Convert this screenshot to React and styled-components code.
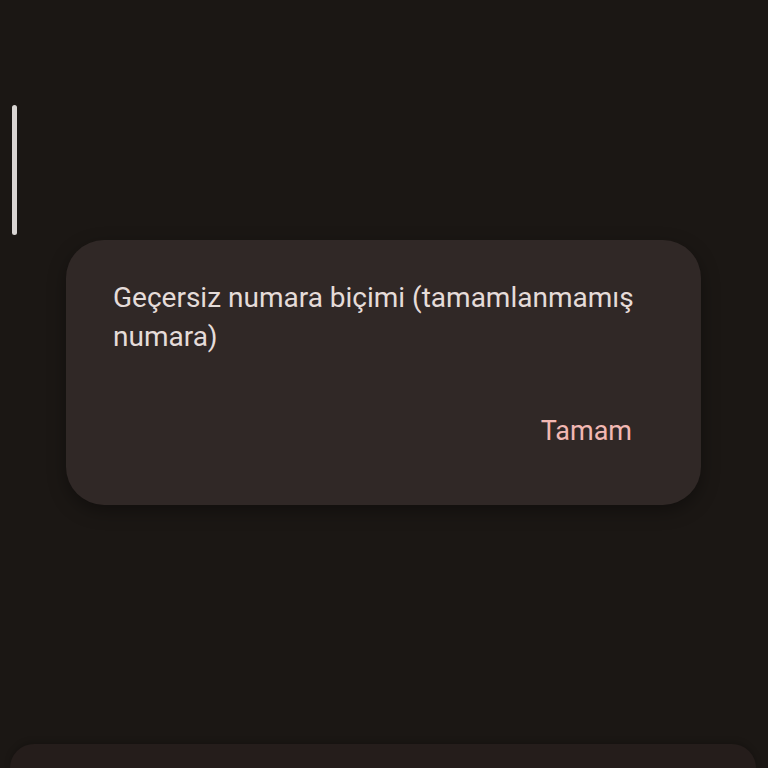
import React from 'react';
import styled, { createGlobalStyle } from 'styled-components';

const GlobalStyle = createGlobalStyle`
  html, body {
    margin: 0;
    padding: 0;
    background: #1b1714;
  }
  * { box-sizing: border-box; }
`;

const Screen = styled.div`
  position: relative;
  width: 768px;
  height: 768px;
  overflow: hidden;
  background: #1b1714;
  display: flex;
  flex-direction: column;
  font-family: Roboto, "Noto Sans", sans-serif;
`;

const ScrollIndicator = styled.div`
  position: absolute;
  left: 12px;
  top: 105px;
  width: 5px;
  height: 130px;
  border-radius: 3px;
  background: #d9d5d3;
`;

const Dialog = styled.div`
  margin: 240px 0 0 66px;
  width: 635px;
  height: 265px;
  border-radius: 38px;
  background: #302826;
  box-shadow: 0 6px 18px rgba(0, 0, 0, 0.35);
  padding: 38px 48px 0 47px;
  display: flex;
  flex-direction: column;
`;

const Message = styled.p`
  margin: 0;
  width: 540px;
  font-size: 28px;
  line-height: 39px;
  color: #e5dcd9;
`;

const Actions = styled.div`
  display: flex;
  justify-content: flex-end;
  margin-top: 60px;
  padding-right: 21px;
`;

const TextButton = styled.button`
  background: none;
  border: none;
  padding: 0;
  font-family: inherit;
  font-size: 27px;
  line-height: 30px;
  color: #f2b8b3;
  cursor: pointer;
`;

const BottomSheet = styled.div`
  margin: auto 12px 0 10px;
  height: 24px;
  border-radius: 40px 40px 0 0;
  background: #251d1b;
  box-shadow: 0 -2px 6px rgba(0, 0, 0, 0.2);
`;

export default function App() {
  return (
    <>
      <GlobalStyle />
      <Screen>
        <ScrollIndicator />
        <Dialog>
          <Message>Geçersiz numara biçimi (tamamlanmamış numara)</Message>
          <Actions>
            <TextButton>Tamam</TextButton>
          </Actions>
        </Dialog>
        <BottomSheet />
      </Screen>
    </>
  );
}
